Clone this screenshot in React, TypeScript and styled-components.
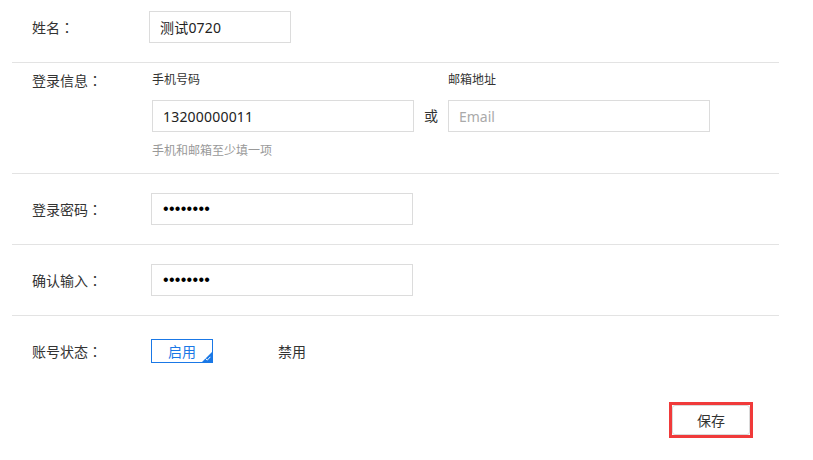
import React from "react";
import styled, { createGlobalStyle } from "styled-components";

const GlobalStyle = createGlobalStyle`
  html, body { margin: 0; padding: 0; background: #fff; }
  body {
    font-family: "Noto Sans", "Noto Sans CJK SC", sans-serif;
    color: #333;
    font-size: 14px;
  }
  * { box-sizing: border-box; }
`;

const Page = styled.div`
  width: 767px;
  margin-left: 12px;
`;

const Row = styled.div<{ $pt: number; $pb: number; $divider?: boolean; $top?: boolean }>`
  display: flex;
  align-items: ${(p) => (p.$top ? "flex-start" : "center")};
  padding-top: ${(p) => p.$pt}px;
  padding-bottom: ${(p) => p.$pb}px;
  border-bottom: ${(p) => (p.$divider ? "1px solid #e3e3e3" : "none")};
`;

const Label = styled.div<{ $lh?: number }>`
  width: 139px;
  flex-shrink: 0;
  padding-left: 20px;
  font-size: 14px;
  line-height: ${(p) => p.$lh ?? 20}px;
  color: #333;
  white-space: nowrap;
`;

const Colon = styled.span`
  font-family: "Noto Sans CJK JP", sans-serif;
`;

const TextInput = styled.input<{ $w: number; $shift?: number }>`
  width: ${(p) => p.$w}px;
  height: 32px;
  margin: 0 0 0 ${(p) => p.$shift ?? 0}px;
  padding: 0 10px;
  border: 1px solid #dcdcdc;
  border-radius: 0;
  outline: none;
  font-family: "Noto Sans", "Noto Sans CJK SC", sans-serif;
  font-size: 14px;
  letter-spacing: 0.2px;
  color: #222;
  background: #fff;
  &::placeholder { color: #aaa; letter-spacing: 0; }
`;

const PasswordInput = styled(TextInput)`
  padding-left: 11px;
  font-family: "Liberation Sans", sans-serif;
  font-size: 16px;
  letter-spacing: 0.3px;
  color: #000;
`;

const Contact = styled.div`
  display: flex;
  margin-left: 1px;
`;

const Field = styled.div`
  display: flex;
  flex-direction: column;
  width: 262px;
`;

const SubLabel = styled.div`
  font-size: 12px;
  line-height: 18px;
  color: #333;
  margin-bottom: 11px;
`;

const Hint = styled.div`
  font-size: 12px;
  line-height: 18px;
  color: #999;
  margin-top: 10px;
  white-space: nowrap;
`;

const Or = styled.div`
  width: 34px;
  margin-top: 29px;
  height: 32px;
  line-height: 32px;
  text-align: center;
  font-size: 14px;
  color: #333;
`;

const Options = styled.div`
  display: flex;
  gap: 48px;
`;

const Option = styled.button<{ $active?: boolean }>`
  position: relative;
  width: 62px;
  height: 24px;
  padding: 0;
  border: 1px solid ${(p) => (p.$active ? "#1a78e6" : "transparent")};
  background: #fff;
  color: ${(p) => (p.$active ? "#1a78e6" : "#333")};
  font-family: "Noto Sans CJK SC", sans-serif;
  font-size: 14px;
  line-height: 22px;
  cursor: pointer;
`;

const Corner = styled.span`
  position: absolute;
  right: -1px;
  bottom: -1px;
  width: 0;
  height: 0;
  border-left: 12px solid transparent;
  border-bottom: 12px solid #1a78e6;
`;

const CornerCheck = styled.svg`
  position: absolute;
  right: 1px;
  bottom: 1px;
  width: 6px;
  height: 5px;
`;

const Footer = styled.div`
  display: flex;
  justify-content: flex-end;
  padding-top: 39px;
  padding-right: 26px;
`;

const Highlight = styled.div`
  display: inline-flex;
  border: 3px solid #f03a3a;
`;

const SaveButton = styled.button`
  width: 78px;
  height: 30px;
  padding: 0;
  border: 1px solid #dadada;
  border-radius: 3px;
  background: #fff;
  color: #333;
  font-family: "Noto Sans CJK SC", sans-serif;
  font-size: 14px;
  cursor: pointer;
`;

export default function App() {
  return (
    <>
      <GlobalStyle />
      <Page>
        <Row $pt={11} $pb={19} $divider>
          <Label>姓名<Colon>：</Colon></Label>
          <TextInput $w={142} $shift={-2} defaultValue="测试0720" />
        </Row>

        <Row $pt={8} $pb={13} $divider $top>
          <Label $lh={18}>登录信息<Colon>：</Colon></Label>
          <Contact>
            <Field>
              <SubLabel>手机号码</SubLabel>
              <TextInput $w={262} defaultValue="13200000011" />
              <Hint>手机和邮箱至少填一项</Hint>
            </Field>
            <Or>或</Or>
            <Field>
              <SubLabel>邮箱地址</SubLabel>
              <TextInput $w={262} placeholder="Email" />
            </Field>
          </Contact>
        </Row>

        <Row $pt={19} $pb={19} $divider>
          <Label>登录密码<Colon>：</Colon></Label>
          <PasswordInput $w={262} type="password" defaultValue="12345678" />
        </Row>

        <Row $pt={19} $pb={19} $divider>
          <Label>确认输入<Colon>：</Colon></Label>
          <PasswordInput $w={262} type="password" defaultValue="12345678" />
        </Row>

        <Row $pt={23} $pb={0}>
          <Label>账号状态<Colon>：</Colon></Label>
          <Options>
            <Option $active>
              启用
              <Corner />
              <CornerCheck viewBox="0 0 6 5">
                <path d="M0.6 2.6 L2.3 4.1 L5.4 0.8" fill="none" stroke="#fff" strokeWidth="1" />
              </CornerCheck>
            </Option>
            <Option>禁用</Option>
          </Options>
        </Row>

        <Footer>
          <Highlight>
            <SaveButton>保存</SaveButton>
          </Highlight>
        </Footer>
      </Page>
    </>
  );
}
